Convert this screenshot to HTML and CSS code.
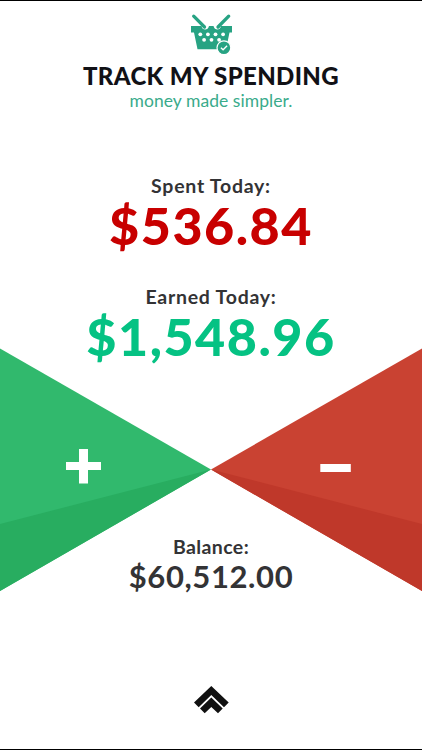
FILE: index.html
```
<!DOCTYPE html>
<html lang="en">

<head>
    <meta charset="UTF-8">
    <meta name="viewport" content="width=device-width, initial-scale=1.0">
    <title>Track My Spending</title>
    <link rel="stylesheet" href="styles.css">
</head>

<body>
    <header>
        <svg class="logo" width="42" height="42" viewBox="0 0 42 42">
            <path d="M3.7 3.2L14.500 14M38.7 3.2L28 14" stroke="#27a383" stroke-width="3.300" stroke-linecap="round" />
            <path d="M1 13H11.500C12 17.500 18 18 19 13H23.500C24.500 18 30.500 17.500 31 13H42V19.500H39.500L36 36.300H7.500L4 19.500H1Z" fill="#27a383" />
            <g fill="#fff">
                <circle cx="10.300" cy="21.300" r="1.900" />
                <circle cx="17.900" cy="21.300" r="1.900" />
                <circle cx="25.500" cy="21.300" r="1.900" />
                <circle cx="33.100" cy="21.300" r="1.900" />
                <circle cx="14.100" cy="26.800" r="1.900" />
                <circle cx="21.500" cy="26.800" r="1.900" />
                <circle cx="29.100" cy="26.800" r="1.900" />
            </g>
            <circle cx="33.900" cy="34.700" r="6.900" fill="#27a383" stroke="#fff" stroke-width="1.200" />
            <path d="M30.900 34.700L33.100 36.800L37.100 32.800" fill="none" stroke="#fff" stroke-width="1.300" />
        </svg>
        <h1>TRACK MY SPENDING</h1>
        <p class="tagline">money made simpler.</p>
    </header>

    <section class="total spent">
        <h2>Spent Today:</h2>
        <p>$536.84</p>
    </section>
    <section class="total earned">
        <h2>Earned Today:</h2>
        <p>$1,548.96</p>
    </section>

    <nav class="actions">
        <svg width="211" height="244" viewBox="0 0 211 244">
            <path d="M0 0.5L211 121.5L0 243Z" fill="#31b96d" />
            <path d="M0 176L211 121.5L0 243Z" fill="#28ad60" />
            <path d="M79 101h9v13h13v8h-13v13.500h-9v-13.500h-13v-8h13Z" fill="#fff" />
        </svg>
        <svg width="211" height="244" viewBox="0 0 211 244">
            <path d="M211 0.5L0 121.5L211 243Z" fill="#c94232" />
            <path d="M211 176L0 121.5L211 243Z" fill="#bf382a" />
            <path d="M109.300 116h30.500v8h-30.500Z" fill="#fff" />
        </svg>
    </nav>

    <section class="balance">
        <h2>Balance:</h2>
        <p>$60,512.00</p>
    </section>

    <footer>
        <svg width="36" height="30" viewBox="0 0 36 30">
            <path d="M1 16.500L18.300 0L35.700 16.500L31 21.200L18.300 9L5.700 21.200Z" fill="#111" />
            <path d="M7 22.500L18.300 11.500L29.700 22.500L25 27.300L18.300 21L11.700 27.300Z" fill="#111" />
        </svg>
    </footer>
</body>

</html>
```
FILE: styles.css
```
* {
    box-sizing: border-box;
}

body {
    display: flex;
    flex-direction: column;
    margin: 0;
    height: 750px;
    border-top: 1px solid #000;
    border-bottom: 1px solid #000;
    background: #fff;
    color: #333335;
    font-family: Lato, "Liberation Sans", sans-serif;
    text-align: center;
    overflow: hidden;
}

h1, h2, p {
    margin: 0;
    white-space: nowrap;
}

header {
    height: 172px;
    padding-top: 12px;
}

.logo {
    display: block;
    margin: 0 auto;
}

h1 {
    color: #111116;
    font-size: 24px;
    font-weight: 900;
    line-height: 30px;
    margin-top: 6px;
    letter-spacing: 0.35px;
}

.tagline {
    color: #3aab8b;
    font-size: 17.5px;
    line-height: 20px;
    letter-spacing: 0.05px;
}

h2 {
    font-size: 19.5px;
    font-weight: 700;
    line-height: 26px;
    letter-spacing: 0.75px;
}

.total {
    height: 111px;
}

.total p {
    font-size: 52px;
    font-weight: 900;
    line-height: 52px;
    letter-spacing: 1.5px;
}

.spent p {
    color: #c80000;
}

.earned p {
    color: #05c283;
}

/* the tips of the two triangles meet in the middle of the page */
.actions {
    display: flex;
    height: 244px;
    margin-top: -47px;
}

.balance {
    margin-top: -58px;
}

.balance h2 {
    letter-spacing: 0.4px;
}

.balance p {
    font-size: 31px;
    font-weight: 700;
    line-height: 32px;
    letter-spacing: 0.6px;
}

footer {
    margin-top: auto;
    height: 63px;
}
```
